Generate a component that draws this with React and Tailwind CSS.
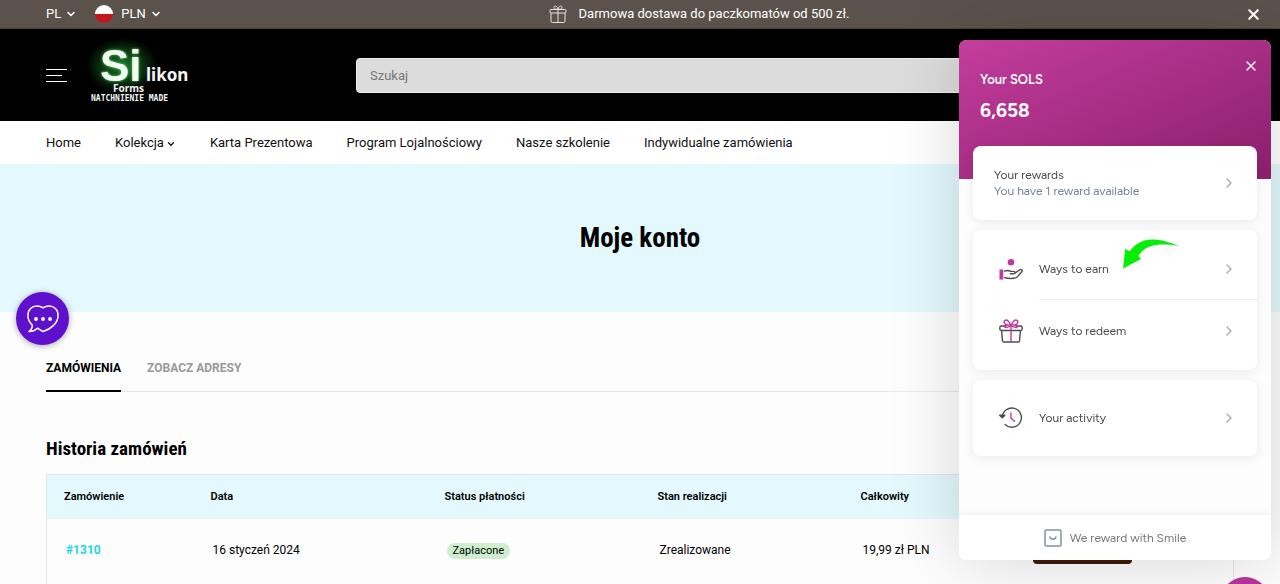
import React from 'react';
import { FiChevronDown, FiChevronRight, FiX } from 'react-icons/fi';

const navLinks = [
    { label: 'Home' },
    { label: 'Kolekcja', menu: true },
    { label: 'Karta Prezentowa' },
    { label: 'Program Lojalnościowy' },
    { label: 'Nasze szkolenie' },
    { label: 'Indywidualne zamówienia' },
];

const orders = [
    { id: '#1310', date: '16 styczeń 2024', payment: 'Zapłacone', status: 'Zrealizowane', total: '19,99 zł PLN' },
];

const BoxIcon = () => (
    <svg viewBox="0 0 18 18" className="h-[18px] w-[18px]" fill="none" stroke="#e6e3e0" strokeWidth="1" aria-hidden="true">
        <rect x="1" y="4.5" width="16" height="3.5" rx="1" />
        <path d="M2 8v8.2c0 .8.5 1.3 1.3 1.3h11.4c.8 0 1.3-.5 1.3-1.3V8M9 4.5v13M9 4.3C5.500 4.300 5 3.600 5 2.500 5 .3 8.300.3 9 4.300 9.700.3 13 .3 13 2.500c0 1.100-.5 1.800-4 1.800" />
    </svg>
);

const EarnIcon = () => (
    <svg viewBox="0 0 24 24" className="h-6 w-6" fill="none" aria-hidden="true">
        <circle cx="12" cy="5.300" r="3.300" fill="#c0399f" />
        <rect x="0.500" y="12.500" width="3.700" height="10" fill="#c0399f" />
        <path d="M5.500 14.200c2.500-1 4.500-.7 6 .2h3.300c1.800 0 1.900 2.300.1 2.400h-3.600M15.800 16.200l4.600-3.200c1.800-1.100 3.600.2 2.300 1.800l-3.900 4.600c-1 1.200-2 1.800-3.700 1.900-3.500.3-6.300.2-9.600-.7" stroke="#4c4c4c" strokeWidth="1.400" strokeLinecap="round" strokeLinejoin="round" />
    </svg>
);

const RedeemIcon = () => (
    <svg viewBox="0 0 24 24" className="h-6 w-6" fill="none" strokeWidth="1.400" strokeLinecap="round" strokeLinejoin="round" aria-hidden="true">
        <path d="M7 7H2.300C1 7 .8 7.500.8 8.500v1.600c0 1 .5 1.400 1.500 1.400h19.400c1 0 1.500-.4 1.500-1.400V8.500c0-1-.3-1.500-1.500-1.500H17M2.600 12l.9 10c.1.700.5 1 1.200 1h14.600c.7 0 1.100-.3 1.200-1l.9-10" stroke="#4c4c4c" />
        <path d="M12 7v15.500M12 6.500C10.500 2.500 8 .3 6 1.300c-1.800 1-.9 4 2 4.700M12 6.500c1.500-4 4-6.200 6-5.200 1.800 1 .9 4-2 4.700M11.800 6.300C8.500 5.500 5.500 6.500 5.500 7.600c0 1.300 4 1.200 6.300-1M12.200 6.300c3.300-.8 6.300.2 6.300 1.300 0 1.300-4 1.200-6.300-1" stroke="#c0399f" />
    </svg>
);

const ActivityIcon = () => (
    <svg viewBox="0 0 24 24" className="h-6 w-6" fill="none" strokeWidth="1.400" strokeLinecap="round" strokeLinejoin="round" aria-hidden="true">
        <path d="M3.200 11a9.600 9.600 0 1 1 2.900 7.500" stroke="#4c4c4c" />
        <path d="M.7 9.200h5.200l-2.600 2.600z" fill="#4c4c4c" stroke="#4c4c4c" />
        <path d="M12 7v5.200l3.600 3" stroke="#c0399f" />
    </svg>
);

const Logo = () => (
    <svg viewBox="0 0 112 58" className="h-[58px] w-[112px] overflow-visible" role="img" aria-label="Silikon Forms">
        <defs>
            <radialGradient id="glow">
                <stop offset="0" stopColor="#1f7a2c" />
                <stop offset="0.5" stopColor="#0e3a14" />
                <stop offset="1" stopColor="#000" />
            </radialGradient>
            <filter id="halo" x="-30%" y="-30%" width="160%" height="160%">
                <feDropShadow dx="0" dy="0" stdDeviation="1.500" floodColor="#4be05c" />
            </filter>
        </defs>
        <ellipse cx="36" cy="20" rx="36" ry="28" fill="url(#glow)" />
        <text x="14" y="35" fontFamily="Liberation Sans, sans-serif" fontWeight="700" fontSize="44" fill="#f3fff3" filter="url(#halo)">Si</text>
        <g fill="#f4f4f4" fontWeight="700">
            <text x="60" y="35" fontFamily="Noto Sans, sans-serif" fontSize="17">likon</text>
            <text x="27" y="46" fontFamily="Noto Sans, sans-serif" fontSize="10">Forms</text>
            <text x="5" y="55" fontFamily="DejaVu Sans Mono, monospace" fontSize="8">NATCHNIENIE MADE</text>
        </g>
    </svg>
);

const ChatIcon = () => (
    <svg viewBox="0 0 32 28" className="h-7 w-8" fill="none" stroke="#fff" strokeWidth="1.500" strokeLinejoin="round" aria-hidden="true">
        <path d="M2 26.500c2.500-2 3.500-4.500 3.200-6.500C2.500 17.500.9 14.500.9 10.500.9 4.500 5 1 10 1c2.300 0 4.300.5 6 1.800C17.700 1.500 19.700 1 22 1c5 0 9.100 3.500 9.100 9.500 0 7.500-7 13.500-15 16-2-.9-3.900-2-5.600-3.300C8 25.500 5 26.700 2 26.500z" />
        <g fill="#fff" stroke="none">
            <circle cx="9" cy="14" r="1.900" />
            <circle cx="16" cy="14" r="1.900" />
            <circle cx="23" cy="14" r="1.900" />
        </g>
    </svg>
);

const RewardRow = ({ icon, label }) => (
    <button type="button" className="flex w-full items-center pr-5 pl-[26px] text-left">
        {icon}
        <span className="ml-4 flex-1 text-[12px] text-[#4a4a4a]">{label}</span>
        <FiChevronRight className="h-4 w-4 text-[#aaa]" />
    </button>
);

const RewardsPanel = () => (
    <aside className="fixed top-10 right-[9px] flex h-[520px] w-[312px] flex-col overflow-hidden rounded-lg bg-[#fdfdfd] font-['Figtree','Lato',sans-serif] shadow-[0_0_70px_rgba(0,0,0,0.16)]">
        <header className="flex h-[139px] shrink-0 justify-between bg-linear-to-br from-[#c43d9d] to-[#8a1f6d] pt-[17px] pr-3 pl-[21px] text-white">
            <div className="pt-3">
                <h2 className="text-[13px] leading-[22px] font-semibold">Your SOLS</h2>
                <p className="mt-1 text-[19px] leading-8 font-bold">6,658</p>
            </div>
            <button type="button" aria-label="Zamknij panel" className="h-[18px]">
                <FiX className="h-4 w-4" />
            </button>
        </header>

        <div className="z-10 -mt-[33px] flex flex-1 flex-col gap-[10px] px-[14px]">
            <button type="button" className="flex h-[74px] items-center rounded-lg bg-white pr-5 pl-[21px] text-left shadow-[0_2px_12px_rgba(0,0,0,0.08)]">
                <span className="flex-1 text-[12px] leading-4 text-[#4a4a4a]">
                    Your rewards
                    <span className="block text-[#748494]">You have 1 reward available</span>
                </span>
                <FiChevronRight className="h-4 w-4 text-[#aaa]" />
            </button>
            <div className="flex h-[140px] flex-col rounded-lg bg-white shadow-[0_2px_12px_rgba(0,0,0,0.08)]">
                <div className="flex h-[69px] pt-2">
                    <RewardRow icon={<EarnIcon />} label="Ways to earn" />
                </div>
                <div className="ml-[66px] border-t border-[#ebebeb]" />
                <div className="flex h-[62px]">
                    <RewardRow icon={<RedeemIcon />} label="Ways to redeem" />
                </div>
            </div>
            <div className="flex h-[76px] rounded-lg bg-white shadow-[0_2px_12px_rgba(0,0,0,0.08)]">
                <RewardRow icon={<ActivityIcon />} label="Your activity" />
            </div>
        </div>

        <footer className="flex h-[45px] items-center justify-center gap-2 bg-white text-[12px] text-[#777] shadow-[0_0_10px_rgba(0,0,0,0.07)]">
            <svg viewBox="0 0 18 18" className="h-[18px] w-[18px]" fill="none" stroke="#8090a0" strokeWidth="1.500" aria-hidden="true">
                <rect x="1" y="1" width="16" height="16" rx="1.500" />
                <path d="M6 7.500c.3 3.600 5.700 3.600 6 0" />
            </svg>
            We reward with Smile
        </footer>

        {/* arrow pointing at "Ways to earn" */}
        <svg viewBox="0 0 56 30" className="absolute top-[199px] left-[164px] z-20 h-[30px] w-14" aria-hidden="true">
            <path d="M0 29.500 2.200 10l4.600 2.300C15 1 25 .2 34 .7c7 .6 14 3.200 22 6.200-12-1.700-20-1.900-26-.3-8 2.200-12 6-14.500 10.500l2.500 2.900z" fill="#06ee06" />
        </svg>
    </aside>
);

const OrdersTable = () => (
    <table className="w-full table-fixed border border-[#e4e8e8] text-left text-black">
        <colgroup>
            <col className="w-[147px]" />
            <col className="w-[234px]" />
            <col className="w-[213px]" />
            <col className="w-[203px]" />
            <col className="w-[170px]" />
            <col />
        </colgroup>
        <thead className="bg-[#e3f9fd] text-[11px]">
            <tr className="h-11">
                <th className="px-[17px] font-semibold">Zamówienie</th>
                <th className="px-[17px] font-semibold">Data</th>
                <th className="px-[17px] font-semibold">Status płatności</th>
                <th className="px-[17px] font-semibold">Stan realizacji</th>
                <th className="px-[17px] font-semibold">Całkowity</th>
                <th className="px-[17px]" aria-label="Akcje" />
            </tr>
        </thead>
        <tbody className="text-[12px]">
            {orders.map((order) => (
                <tr key={order.id} className="h-20">
                    <td className="px-[19px] pb-4"><a href="#order" className="font-bold text-[#1fd3ea]">{order.id}</a></td>
                    <td className="px-[19px] pb-4">{order.date}</td>
                    <td className="px-[19px] pb-4">
                        <span className="inline-block rounded-full bg-[#cdefcf] px-1.5 text-[11px] leading-4">{order.payment}</span>
                    </td>
                    <td className="px-[19px] pb-4">{order.status}</td>
                    <td className="px-[19px] pb-4">{order.total}</td>
                    <td className="px-[19px] pb-4">
                        <button type="button" aria-label="Szczegóły zamówienia" className="block h-7 w-[99px] rounded bg-[#3d1c08]" />
                    </td>
                </tr>
            ))}
        </tbody>
    </table>
);

const App = () => {
    return (
        <div className="h-screen overflow-hidden bg-[#fdfdfd] font-['Roboto',sans-serif] text-[13px] text-[#111]">
            <div className="flex h-[29px] items-center border-b border-[#484039] bg-[#5b534b] pr-[18px] pl-[46px] text-white">
                <div className="flex flex-1 items-center gap-[18px]">
                    <button type="button" className="flex items-center gap-1">
                        PL <FiChevronDown className="h-3 w-3 stroke-3" />
                    </button>
                    <button type="button" className="flex items-center gap-2">
                        <span className="h-[18px] w-[18px] rounded-full bg-linear-to-b from-white from-50% to-[#c4161c] to-50%" />
                        <span className="flex items-center gap-1">
                            PLN <FiChevronDown className="h-3 w-3 stroke-3" />
                        </span>
                    </button>
                </div>
                <p className="flex items-center gap-3 pl-[90px]">
                    <BoxIcon />
                    Darmowa dostawa do paczkomatów od 500 zł.
                </p>
                <div className="flex flex-1 justify-end">
                    <button type="button" aria-label="Zamknij">
                        <FiX className="h-[17px] w-[17px] stroke-3" />
                    </button>
                </div>
            </div>

            <header className="flex h-[92px] items-center bg-black px-[46px]">
                <button type="button" aria-label="Menu" className="mr-[19px] flex w-[21px] flex-col gap-[5px]">
                    <span className="h-px w-full bg-white" />
                    <span className="h-px w-4 bg-white" />
                    <span className="h-px w-full bg-white" />
                </button>
                <a href="#home" className="mr-[158px]"><Logo /></a>
                <input
                    type="search"
                    aria-label="Szukaj"
                    placeholder="Szukaj"
                    className="h-[35px] max-w-[700px] flex-1 rounded border border-[#eee] bg-[#dcdcdc] px-[13px] placeholder:text-[#777]"
                />
            </header>

            <nav className="flex h-[43px] items-center gap-[34px] bg-white px-[46px] text-[13px] shadow-[0_1px_3px_rgba(0,60,70,0.14)]">
                {navLinks.map((link) => (
                    <a key={link.label} href="#nav" className="flex items-center gap-0.5">
                        {link.label}
                        {link.menu && <FiChevronDown className="mt-0.5 h-[10px] w-[10px] stroke-3" />}
                    </a>
                ))}
            </nav>

            <section className="flex h-[148px] items-center justify-center bg-[#e3f9fd]">
                <h1 className="font-['Roboto_Condensed','Liberation_Sans_Narrow',sans-serif] text-[27px] leading-9 font-bold text-black">Moje konto</h1>
            </section>

            <main className="px-[46px] pt-10">
                <div className="flex h-10 gap-[26px] border-b border-[#e8e8e8] text-[12px] leading-8">
                    <button type="button" className="h-10 border-b-2 border-black pb-1.5 font-bold text-black">ZAMÓWIENIA</button>
                    <button type="button" className="h-10 border-b-2 border-transparent pb-1.5 font-bold text-[#999]">ZOBACZ ADRESY</button>
                </div>
                <h2 className="mt-[43px] mb-[11px] font-['Roboto_Condensed','Liberation_Sans_Narrow',sans-serif] text-[19px] leading-7 font-bold text-black">Historia zamówień</h2>
                <OrdersTable />
            </main>

            <button type="button" aria-label="Czat" className="fixed top-[292px] left-4 flex h-[53px] w-[53px] items-center justify-center rounded-full bg-[#5f10cf] shadow-[0_1px_6px_rgba(0,0,0,0.35)]">
                <ChatIcon />
            </button>
            <button type="button" aria-label="Nagrody" className="fixed right-[10px] -bottom-[43px] h-[50px] w-[50px] rounded-full bg-[#b9369a]" />
            <RewardsPanel />
        </div>
    );
};

export default App;
